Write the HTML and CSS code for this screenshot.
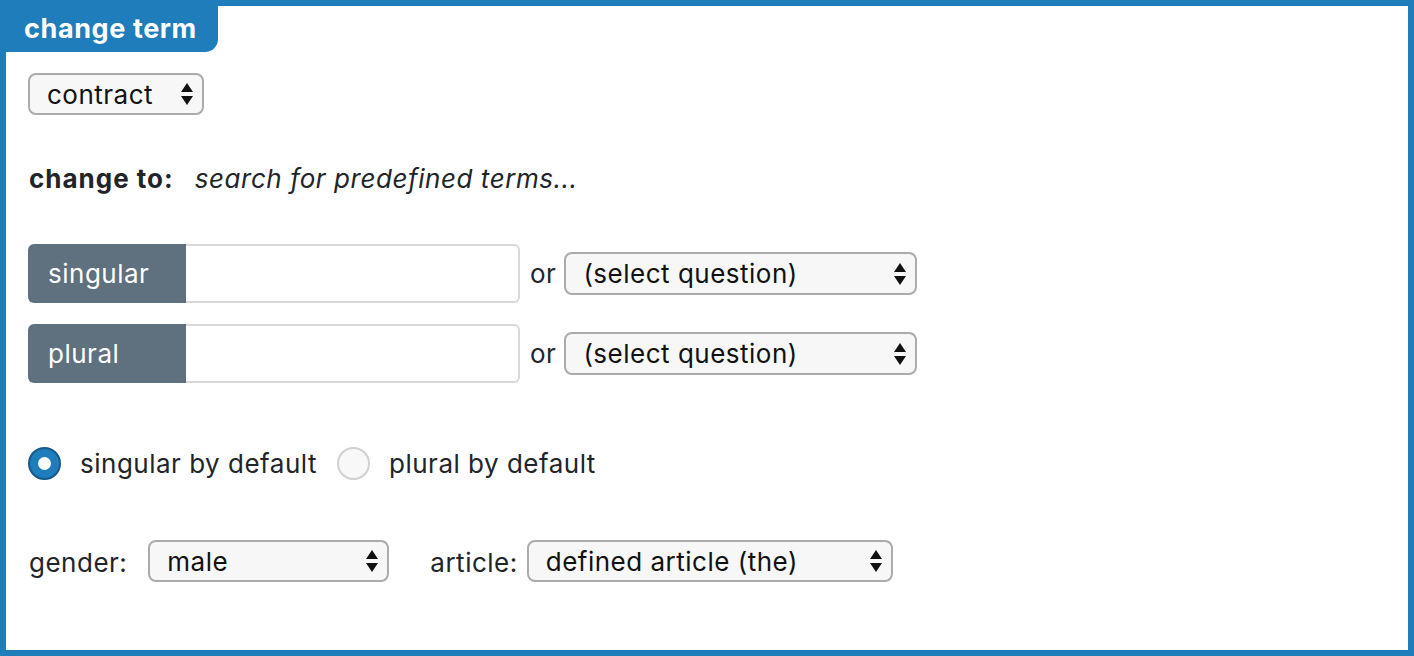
FILE: index.html
```html
<!DOCTYPE html>
<html>
<head>
<meta charset="utf-8">
<link rel="stylesheet" href="styles.css">
</head>
<body>
<div class="panel">
  <div class="tab">change term</div>
  <div class="content">
    <div class="row-term">
      <div class="select sel-term"><span>contract</span><svg class="arrows" width="12" height="24" viewBox="0 0 12 24"><path d="M6 1 L12 10 L0 10 Z"/><path d="M6 23 L12 14 L0 14 Z"/></svg></div>
    </div>
    <div class="row-change">
      <span class="change-label">change to:</span>
      <span class="change-search">search for predefined terms...</span>
    </div>
    <div class="form-row">
      <div class="group">
        <div class="group-label">singular</div>
        <div class="group-input"></div>
      </div>
      <span class="or">or</span>
      <div class="select sel-q"><span>(select question)</span><svg class="arrows" width="12" height="24" viewBox="0 0 12 24"><path d="M6 1 L12 10 L0 10 Z"/><path d="M6 23 L12 14 L0 14 Z"/></svg></div>
    </div>
    <div class="form-row second">
      <div class="group">
        <div class="group-label">plural</div>
        <div class="group-input"></div>
      </div>
      <span class="or">or</span>
      <div class="select sel-q"><span>(select question)</span><svg class="arrows" width="12" height="24" viewBox="0 0 12 24"><path d="M6 1 L12 10 L0 10 Z"/><path d="M6 23 L12 14 L0 14 Z"/></svg></div>
    </div>
    <div class="radio-row">
      <span class="radio checked"></span><span class="radio-text">singular by default</span>
      <span class="radio"></span><span class="radio-text">plural by default</span>
    </div>
    <div class="gender-row">
      <span class="lbl">gender:</span>
      <div class="select sel-gender"><span>male</span><svg class="arrows" width="12" height="24" viewBox="0 0 12 24"><path d="M6 1 L12 10 L0 10 Z"/><path d="M6 23 L12 14 L0 14 Z"/></svg></div>
      <span class="lbl lbl-article">article:</span>
      <div class="select sel-article"><span>defined article (the)</span><svg class="arrows" width="12" height="24" viewBox="0 0 12 24"><path d="M6 1 L12 10 L0 10 Z"/><path d="M6 23 L12 14 L0 14 Z"/></svg></div>
    </div>
  </div>
</div>
</body>
</html>
```
FILE: styles.css
```css
* { box-sizing: border-box; }
html, body { margin: 0; padding: 0; background: #fff; }
body {
  font-family: Inter, "Noto Sans", "Liberation Sans", sans-serif;
  font-size: 26px;
  letter-spacing: 0.5px;
  color: #212529;
}
.panel {
  width: 1414px;
  height: 656px;
  border: 6px solid #1f7dbb;
}
.tab {
  width: 212px;
  height: 46px;
  background: #1f7dbb;
  color: #fff;
  font-weight: 700;
  font-size: 27px;
  letter-spacing: 0.6px;
  line-height: 46px;
  padding-left: 18px;
  border-bottom-right-radius: 13px;
}
.content {
  padding-left: 22px;
}
.select {
  display: flex;
  align-items: center;
  justify-content: space-between;
  height: 42px;
  border: 2px solid #ababab;
  border-radius: 8px;
  background: #f7f7f7;
  color: #111;
  padding: 0 9px 0 17px;
}
.arrows { fill: #111; flex: none; }
.row-term { margin-top: 21px; display: flex; }
.sel-term { width: 176px; }
.row-change {
  margin-top: 48px;
  height: 30px;
  display: flex;
  align-items: center;
}
.change-label { font-weight: 700; margin-left: 1px; letter-spacing: 1px; }
.change-search { font-style: italic; margin-left: 21px; letter-spacing: 0.55px; }
.form-row {
  margin-top: 51px;
  display: flex;
  align-items: center;
}
.form-row.second { margin-top: 21px; }
.group { display: flex; height: 59px; }
.group-label {
  width: 158px;
  background: #5f707f;
  color: #fff;
  border-radius: 6px 0 0 6px;
  padding-left: 20px;
  line-height: 59px;
}
.group-input {
  width: 334px;
  border: 2px solid #d9d9d9;
  border-left: none;
  border-radius: 0 6px 6px 0;
  background: #fff;
}
.or { margin-left: 10px; margin-right: 8px; }
.sel-q { width: 353px; height: 43px; }
.radio-row {
  margin-top: 63px;
  height: 34px;
  display: flex;
  align-items: center;
}
.radio {
  width: 33px;
  height: 33px;
  border-radius: 50%;
  border: 2px solid #d0d0d0;
  background: #f8f8f8;
  flex: none;
}
.radio.checked {
  background: #1f7dbb;
  border: 2px solid #17598a;
  position: relative;
}
.radio.checked::after {
  content: "";
  position: absolute;
  left: 50%;
  top: 50%;
  width: 13px;
  height: 13px;
  margin: -6.5px 0 0 -6.5px;
  border-radius: 50%;
  background: #fff;
}
.radio-text { margin-left: 19px; margin-right: 20px; }
.gender-row {
  margin-top: 60px;
  display: flex;
  align-items: center;
}
.lbl { margin-left: 1px; padding-top: 2px; }
.sel-gender { width: 241px; margin-left: 21px; }
.lbl-article { margin-left: 41px; }
.sel-article { width: 366px; margin-left: 9px; }
```
